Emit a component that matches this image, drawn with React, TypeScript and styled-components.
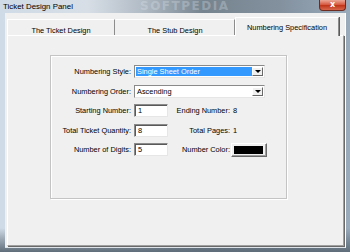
import React from "react";
import styled, { createGlobalStyle } from "styled-components";

const GlobalStyle = createGlobalStyle`
  html, body {
    margin: 0;
    padding: 0;
  }
  body {
    width: 350px;
    height: 252px;
    overflow: hidden;
    font-family: "Liberation Sans", Arial, sans-serif;
  }
`;

const tabs = ["The Ticket Design", "The Stub Design", "Numbering Specification"];
const tabWidths = [108, 120, 104];

export default function App() {
  return (
    <>
      <GlobalStyle />
      <Window>
        <TitleBar>
          <Title>Ticket Design Panel</Title>
          <Watermark>SOFTPEDIA</Watermark>
          <CloseButton>x</CloseButton>
        </TitleBar>
        <Frame>
          <Client>
            <TabStrip>
              {tabs.map((t, i) => (
                <Tab key={t} $active={i === 2} $width={tabWidths[i]}>
                  {t}
                </Tab>
              ))}
            </TabStrip>
            <Panel>
              <Group>
                <Label>Numbering Style:</Label>
                <Combo>
                  <ComboText $selected>Single Sheet Order</ComboText>
                  <ArrowButton>
                    <Arrow />
                  </ArrowButton>
                </Combo>

                <Label>Numbering Order:</Label>
                <Combo>
                  <ComboText>Ascending</ComboText>
                  <ArrowButton>
                    <Arrow />
                  </ArrowButton>
                </Combo>

                <Label>Starting Number:</Label>
                <TextBox>1</TextBox>
                <Label>Ending Number:</Label>
                <Value>8</Value>

                <Label>Total Ticket Quantity:</Label>
                <TextBox>8</TextBox>
                <Label>Total Pages:</Label>
                <Value>1</Value>

                <Label>Number of Digits:</Label>
                <TextBox>5</TextBox>
                <Label>Number Color:</Label>
                <Swatch>
                  <SwatchFill />
                </Swatch>
              </Group>
            </Panel>
          </Client>
        </Frame>
      </Window>
    </>
  );
}

const Window = styled.div`
  width: 350px;
  height: 252px;
  display: flex;
  flex-direction: column;
  background: linear-gradient(
    90deg,
    #cfdbe7 0%,
    #d7dee6 25%,
    #b3bdc7 40%,
    #76848f 58%,
    #83919f 80%,
    #9aabbb 100%
  );
  overflow: hidden;
`;

const TitleBar = styled.div`
  position: relative;
  height: 13px;
  display: flex;
  align-items: flex-start;
  padding-left: 3px;
`;

const Title = styled.div`
  font-size: 7.9px;
  line-height: 13px;
  color: #000;
  position: relative;
  z-index: 1;
`;

const Watermark = styled.div`
  position: absolute;
  left: 140px;
  top: 0;
  font-family: "DejaVu Sans", sans-serif;
  font-weight: bold;
  font-size: 12px;
  line-height: 13px;
  letter-spacing: 1.5px;
  color: rgba(225, 232, 240, 0.3);
`;

const CloseButton = styled.div`
  margin-left: auto;
  margin-right: 4px;
  width: 27px;
  height: 11px;
  box-sizing: border-box;
  border: 1px solid #6e2b20;
  border-top: none;
  border-radius: 0 0 4px 4px;
  background: linear-gradient(180deg, #eba797 0%, #d65c43 45%, #c0371c 55%, #d8664b 100%);
  color: #fff;
  font-family: "DejaVu Sans", sans-serif;
  font-weight: bold;
  font-size: 8px;
  line-height: 9px;
  text-align: center;
  position: relative;
  z-index: 1;
`;

const Frame = styled.div`
  flex: 1;
  display: flex;
  padding: 0 4px 4px 5px;
  background: linear-gradient(180deg, transparent 0%, transparent 90%, #5f6d7a 100%);
`;

const Client = styled.div`
  flex: 1;
  display: flex;
  flex-direction: column;
  background: #f0f0f0;
  padding: 6px 1px 1px 2px;
  border-right: 1px solid #ffffff;
  border-bottom: 1px solid #dfe4ea;
`;

const TabStrip = styled.div`
  height: 16px;
  display: flex;
  align-items: flex-end;
`;

const Tab = styled.div<{ $active?: boolean; $width: number }>`
  position: relative;
  z-index: ${(p) => (p.$active ? 2 : 1)};
  box-sizing: border-box;
  width: ${(p) => p.$width}px;
  height: ${(p) => (p.$active ? 19 : 16)}px;
  margin-bottom: ${(p) => (p.$active ? -1 : 0)}px;
  padding-top: ${(p) => (p.$active ? 5 : 6)}px;
  background: #f0f0f0;
  border-top: 1px solid #ffffff;
  border-left: 1px solid ${(p) => (p.$active ? "#ffffff" : "transparent")};
  border-right: 1px solid #8c8c8c;
  box-shadow: ${(p) => (p.$active ? "1px 0 0 #5a5a5a" : "none")};
  font-size: 7.4px;
  line-height: 9px;
  text-align: center;
  color: #000;
  white-space: nowrap;
  &:first-child {
    border-left: 1px solid #ffffff;
  }
`;

const Panel = styled.div`
  flex: 1;
  box-sizing: border-box;
  border-top: 1px solid #ffffff;
  border-left: 1px solid #ffffff;
  border-right: 1px solid #a0a0a0;
  border-bottom: 1px solid #a0a0a0;
  box-shadow: 1px 1px 0 #696969;
  padding: 19px 0 0 42px;
`;

const Group = styled.div`
  box-sizing: border-box;
  width: 237px;
  height: 144px;
  border: 1px solid #c4c4c4;
  box-shadow: inset 1px 1px 0 #ffffff, 1px 1px 0 #ffffff;
  padding-top: 9px;
  display: grid;
  grid-template-columns: 80px 34px 59px 1fr;
  grid-template-rows: repeat(5, 13px);
  column-gap: 3px;
  row-gap: 6.5px;
  align-items: center;
`;

const Label = styled.div`
  font-size: 7.4px;
  line-height: 9px;
  color: #000;
  text-align: right;
  white-space: nowrap;
`;

const Value = styled.div`
  font-size: 7.4px;
  line-height: 9px;
  color: #000;
`;

const Combo = styled.div`
  grid-column: 2 / span 3;
  justify-self: start;
  width: 131px;
  height: 13px;
  box-sizing: border-box;
  display: flex;
  align-items: stretch;
  background: #fff;
  border: 1px solid;
  border-color: #8a8a8a #e6e6e6 #e6e6e6 #8a8a8a;
  padding: 1px;
`;

const ComboText = styled.div<{ $selected?: boolean }>`
  flex: 1;
  font-size: 7.4px;
  line-height: 9px;
  padding-left: 1px;
  color: ${(p) => (p.$selected ? "#fff" : "#000")};
  background: ${(p) => (p.$selected ? "#3399ff" : "transparent")};
  white-space: nowrap;
  overflow: hidden;
`;

const ArrowButton = styled.div`
  width: 11px;
  box-sizing: border-box;
  background: #f0f0f0;
  border: 1px solid;
  border-color: #ffffff #696969 #696969 #ffffff;
  display: flex;
  align-items: center;
  justify-content: center;
`;

const Arrow = styled.div`
  width: 0;
  height: 0;
  border-left: 3px solid transparent;
  border-right: 3px solid transparent;
  border-top: 3px solid #000;
`;

const TextBox = styled.div`
  width: 34px;
  height: 13px;
  box-sizing: border-box;
  background: #fff;
  border: 1px solid;
  border-color: #8a8a8a #e6e6e6 #e6e6e6 #8a8a8a;
  box-shadow: inset 1px 1px 0 #595959;
  font-size: 7.4px;
  line-height: 11px;
  padding-left: 3px;
  color: #000;
`;

const Swatch = styled.div`
  margin-left: -2px;
  width: 36px;
  height: 14px;
  box-sizing: border-box;
  background: #f0f0f0;
  border: 1px solid;
  border-color: #ffffff #696969 #696969 #ffffff;
  box-shadow: inset -1px -1px 0 #a0a0a0;
  padding: 2px 3px 2px 2px;
  display: flex;
`;

const SwatchFill = styled.div`
  flex: 1;
  background: #000;
`;
